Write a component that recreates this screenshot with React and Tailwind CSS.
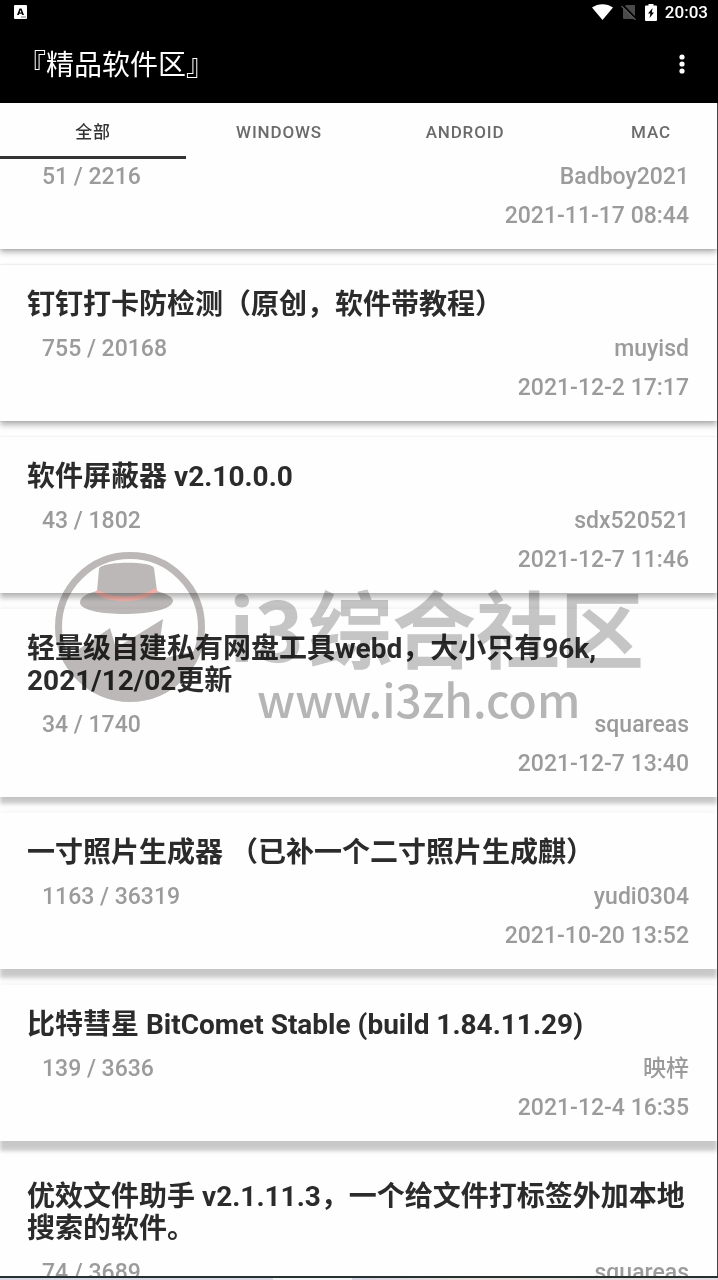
import React from 'react';

const tabs = ['全部', 'WINDOWS', 'ANDROID', 'MAC'];

const posts = [
  {
    stats: '51 / 2216',
    author: 'Badboy2021',
    date: '2021-11-17 08:44',
    shadow: 'shadow-[0_3px_6px_rgba(0,0,0,0.32),0_0_2px_rgba(0,0,0,0.14)]',
  },
  {
    title: '钉钉打卡防检测（原创，软件带教程）',
    stats: '755 / 20168',
    author: 'muyisd',
    date: '2021-12-2 17:17',
    shadow: 'shadow-[0_4px_6px_rgba(0,0,0,0.3),0_0_2px_rgba(0,0,0,0.14)]',
  },
  {
    title: '软件屏蔽器 v2.10.0.0',
    stats: '43 / 1802',
    author: 'sdx520521',
    date: '2021-12-7 11:46',
    shadow: 'shadow-[0_5px_5px_rgba(0,0,0,0.26),0_0_2px_rgba(0,0,0,0.12)]',
  },
  {
    title: '轻量级自建私有网盘工具webd，大小只有96k, 2021/12/02更新',
    stats: '34 / 1740',
    author: 'squareas',
    date: '2021-12-7 13:40',
    shadow: 'shadow-[0_7px_4px_rgba(0,0,0,0.2),0_0_6px_rgba(0,0,0,0.08)]',
  },
  {
    title: '一寸照片生成器 （已补一个二寸照片生成麒）',
    stats: '1163 / 36319',
    author: 'yudi0304',
    date: '2021-10-20 13:52',
    shadow: 'shadow-[0_9px_4px_rgba(0,0,0,0.2),0_0_8px_rgba(0,0,0,0.06)]',
  },
  {
    title: '比特彗星 BitComet Stable (build 1.84.11.29)',
    stats: '139 / 3636',
    author: '映梓',
    date: '2021-12-4 16:35',
    shadow: 'shadow-[0_10px_4px_rgba(0,0,0,0.2),0_0_8px_rgba(0,0,0,0.06)]',
  },
  {
    title: '优效文件助手 v2.1.11.3，一个给文件打标签外加本地搜索的软件。',
    stats: '74 / 3689',
    author: 'squareas',
    date: '2021-12-5 10:12',
    shadow: 'shadow-[0_10px_4px_rgba(0,0,0,0.2)]',
  },
];

const StatusBar = () => (
  <div className="flex h-6 items-center justify-between pl-3.5 pr-2.5 text-white">
    <svg className="h-[14px] w-[13px]" viewBox="0 0 13 14">
      <rect width="13" height="14" rx="1" fill="#fff" />
      <path d="M3 10 L5.5 3.5 H7.5 L10 10 H8.2 L7.8 8.7 H5.2 L4.8 10 Z M5.6 7.4 H7.4 L6.5 4.9 Z" fill="#000" fillRule="evenodd" />
      <path d="M7 12 H12" stroke="#777" strokeWidth="1" />
    </svg>
    <div className="flex items-center gap-2">
      <svg className="h-4 w-[21px]" viewBox="0 0 21 16">
        <path d="M0 3.6 C6 -1 15 -1 21 3.6 L10.5 16 Z" fill="#fff" />
      </svg>
      <svg className="h-4 w-4" viewBox="0 0 16 16">
        <path d="M5 1 H13 Q14 1 14 2 V15 H3 Q2 15 2 14 V4 Z" fill="#4a4a4a" />
        <path d="M1.8 1.2 L16 15.6" stroke="#000" strokeWidth="2" />
        <path d="M0.5 2 L14.5 16" stroke="#5a5a5a" strokeWidth="1.3" />
      </svg>
      <svg className="h-[17px] w-3" viewBox="0 0 12 17">
        <path d="M3.5 0 H8.5 V1.5 H11 Q12 1.5 12 2.5 V16 Q12 17 11 17 H1 Q0 17 0 16 V2.5 Q0 1.5 1 1.5 H3.5 Z" fill="#fff" />
        <path d="M7.6 4 L3 9.6 H5.4 L4.6 14 L9 8.4 H6.8 Z" fill="#000" />
      </svg>
      <span className="text-[17px] font-medium leading-6">20:03</span>
    </div>
  </div>
);

const PostCard = ({ post }) => (
  <article className={`bg-[#fefefe] pb-[19px] pl-[27px] pr-7 ${post.title ? 'pt-6' : 'pt-1'} ${post.shadow}`}>
    {post.title && (
      <h2 className="mb-3.5 text-[28px] font-bold leading-8 text-[#2b2b2b]">{post.title}</h2>
    )}
    <div className="flex justify-between pl-[15px] text-[23px] font-medium leading-7 text-[#9b9b9b]">
      <span>{post.stats}</span>
      <span>{post.author}</span>
    </div>
    <p className="mt-[11px] text-right text-[23px] font-medium leading-7 text-[#9b9b9b]">{post.date}</p>
  </article>
);

const Watermark = () => (
  <div className="pointer-events-none absolute left-[55px] top-[552px] flex gap-6 mix-blend-multiply" aria-hidden="true">
    <svg className="h-[150px] w-[150px]" viewBox="0 0 150 150">
      <circle cx="75" cy="75" r="71.5" fill="none" stroke="#bcb9b8" strokeWidth="7" />
      <path d="M8 108 L55 76 L61 96 L108 67 L102 108 L144 98 A75 75 0 0 1 8 108 Z" fill="#bcb9b8" />
      <path d="M25 51 C25 44 34 41 42 39 L44 17 C46 9 97 9 99 16 L102 39 C112 42 118 45 118 49 C116 66 27 66 25 51 Z" fill="#bcb9b8" />
      <path d="M42 37 C56 47 86 47 101 35 L102 40 C86 52 56 52 41 42 Z" fill="#efb0a8" />
    </svg>
    <div className="pt-8">
      <p className="flex gap-1 font-['Noto_Sans_CJK_SC',sans-serif] text-[84px] font-bold leading-[84px] text-[#c6c6c6]">
        <span>i3</span>
        <span>综合社区</span>
      </p>
      <p className="pl-7 font-['Noto_Sans_CJK_SC',sans-serif] text-[46px] font-medium leading-[60px] text-[#b6b6b6]">
        www.i3zh.com
      </p>
    </div>
  </div>
);

const App = () => {
  return (
    <div className="relative flex h-screen flex-col overflow-hidden bg-[#fefefe] font-[Roboto,'Noto_Sans_CJK_SC',sans-serif]">
      <header className="shrink-0 bg-black">
        <StatusBar />
        <div className="flex h-[79px] items-center justify-between pl-[18px] pr-6">
          <h1 className="pt-1 text-[28px] leading-8 text-white">『精品软件区』</h1>
          <button type="button" aria-label="更多" className="flex h-10 w-6 items-center justify-center">
            <svg className="h-5 w-[6px]" viewBox="0 0 6 20" fill="#fff">
              <circle cx="3" cy="3" r="2.6" />
              <circle cx="3" cy="10" r="2.6" />
              <circle cx="3" cy="17" r="2.6" />
            </svg>
          </button>
        </div>
      </header>

      <div className="flex min-h-0 grow flex-col border-r border-[#444]">
        <nav className="flex h-14 shrink-0 overflow-hidden">
          {tabs.map((tab, i) => (
            <button
              key={tab}
              type="button"
              className={`w-[186px] shrink-0 border-b-[3px] pt-1.5 text-[17px] font-medium tracking-wider ${
                i === 0 ? 'border-[#333] text-[#333]' : 'border-transparent text-[#6b6b6b]'
              }`}
            >
              {tab}
            </button>
          ))}
        </nav>
        <main className="flex min-h-0 grow flex-col gap-4 overflow-hidden">
          {posts.map((post) => (
            <PostCard key={post.date} post={post} />
          ))}
        </main>
      </div>

      <div className="flex h-1 shrink-0 border-t-2 border-[#26302f] bg-linear-to-r from-[#d9d6e6] from-50% via-[#ecdfdc] via-65% to-[#e6d9e0]">
        <div className="ml-[38%] w-[11%] bg-[#f3f3f5]" />
      </div>

      <Watermark />
    </div>
  );
};

export default App;
